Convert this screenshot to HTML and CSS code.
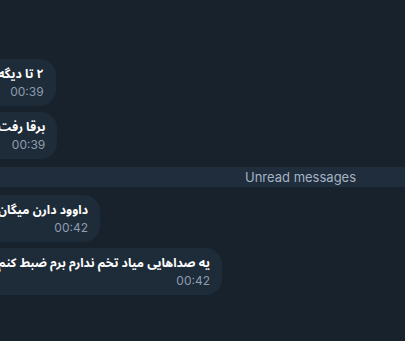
FILE: index.html
```html
<!DOCTYPE html>
<html lang="fa">
<head>
    <meta charset="UTF-8">
    <title>Chat</title>
    <link rel="stylesheet" href="styles.css">
</head>
<body>
    <div class="chat">
        <div class="msg">
            <div class="msg-text">۲ تا دیگه</div>
            <div class="msg-time">00:39</div>
        </div>
        <div class="msg">
            <div class="msg-text">برقا رفت</div>
            <div class="msg-time">00:39</div>
        </div>

        <div class="unread">Unread messages</div>

        <div class="msg">
            <div class="msg-text">داوود دارن میگان</div>
            <div class="msg-time">00:42</div>
        </div>
        <div class="msg">
            <div class="msg-text">یه صداهایی میاد تخم ندارم برم ضبط کنم</div>
            <div class="msg-time">00:42</div>
        </div>
    </div>
</body>
</html>
```

FILE: styles.css
```css
body {
    margin: 0;
    height: 341px;
    overflow: hidden;
    background: #18222d;
    font-family: 'Inter', 'DejaVu Sans', sans-serif;
}
.chat {
    display: flex;
    flex-direction: column;
    gap: 6px;
    padding-top: 59px;
}
.msg {
    align-self: flex-start;
    margin-left: -16px;
    padding: 5px 12px 6px 14px;
    background: #1e2b39;
    border-radius: 16px;
    direction: rtl;
}
.msg-text {
    color: #ffffff;
    font-family: 'Noto Sans Arabic', 'Noto Naskh Arabic', 'Vazirmatn', 'DejaVu Sans', sans-serif;
    font-size: 12.3px;
    font-weight: 700;
    line-height: 20px;
    white-space: nowrap;
}
.msg-time {
    direction: ltr;
    text-align: right;
    color: #8d9eaf;
    font-size: 12px;
    line-height: 16px;
}
.unread {
    margin: 2px 0 2px;
    height: 20px;
    line-height: 20px;
    padding-left: 245px;
    background: #1f2d3c;
    color: #a5b3c2;
    font-size: 13px;
}
```
